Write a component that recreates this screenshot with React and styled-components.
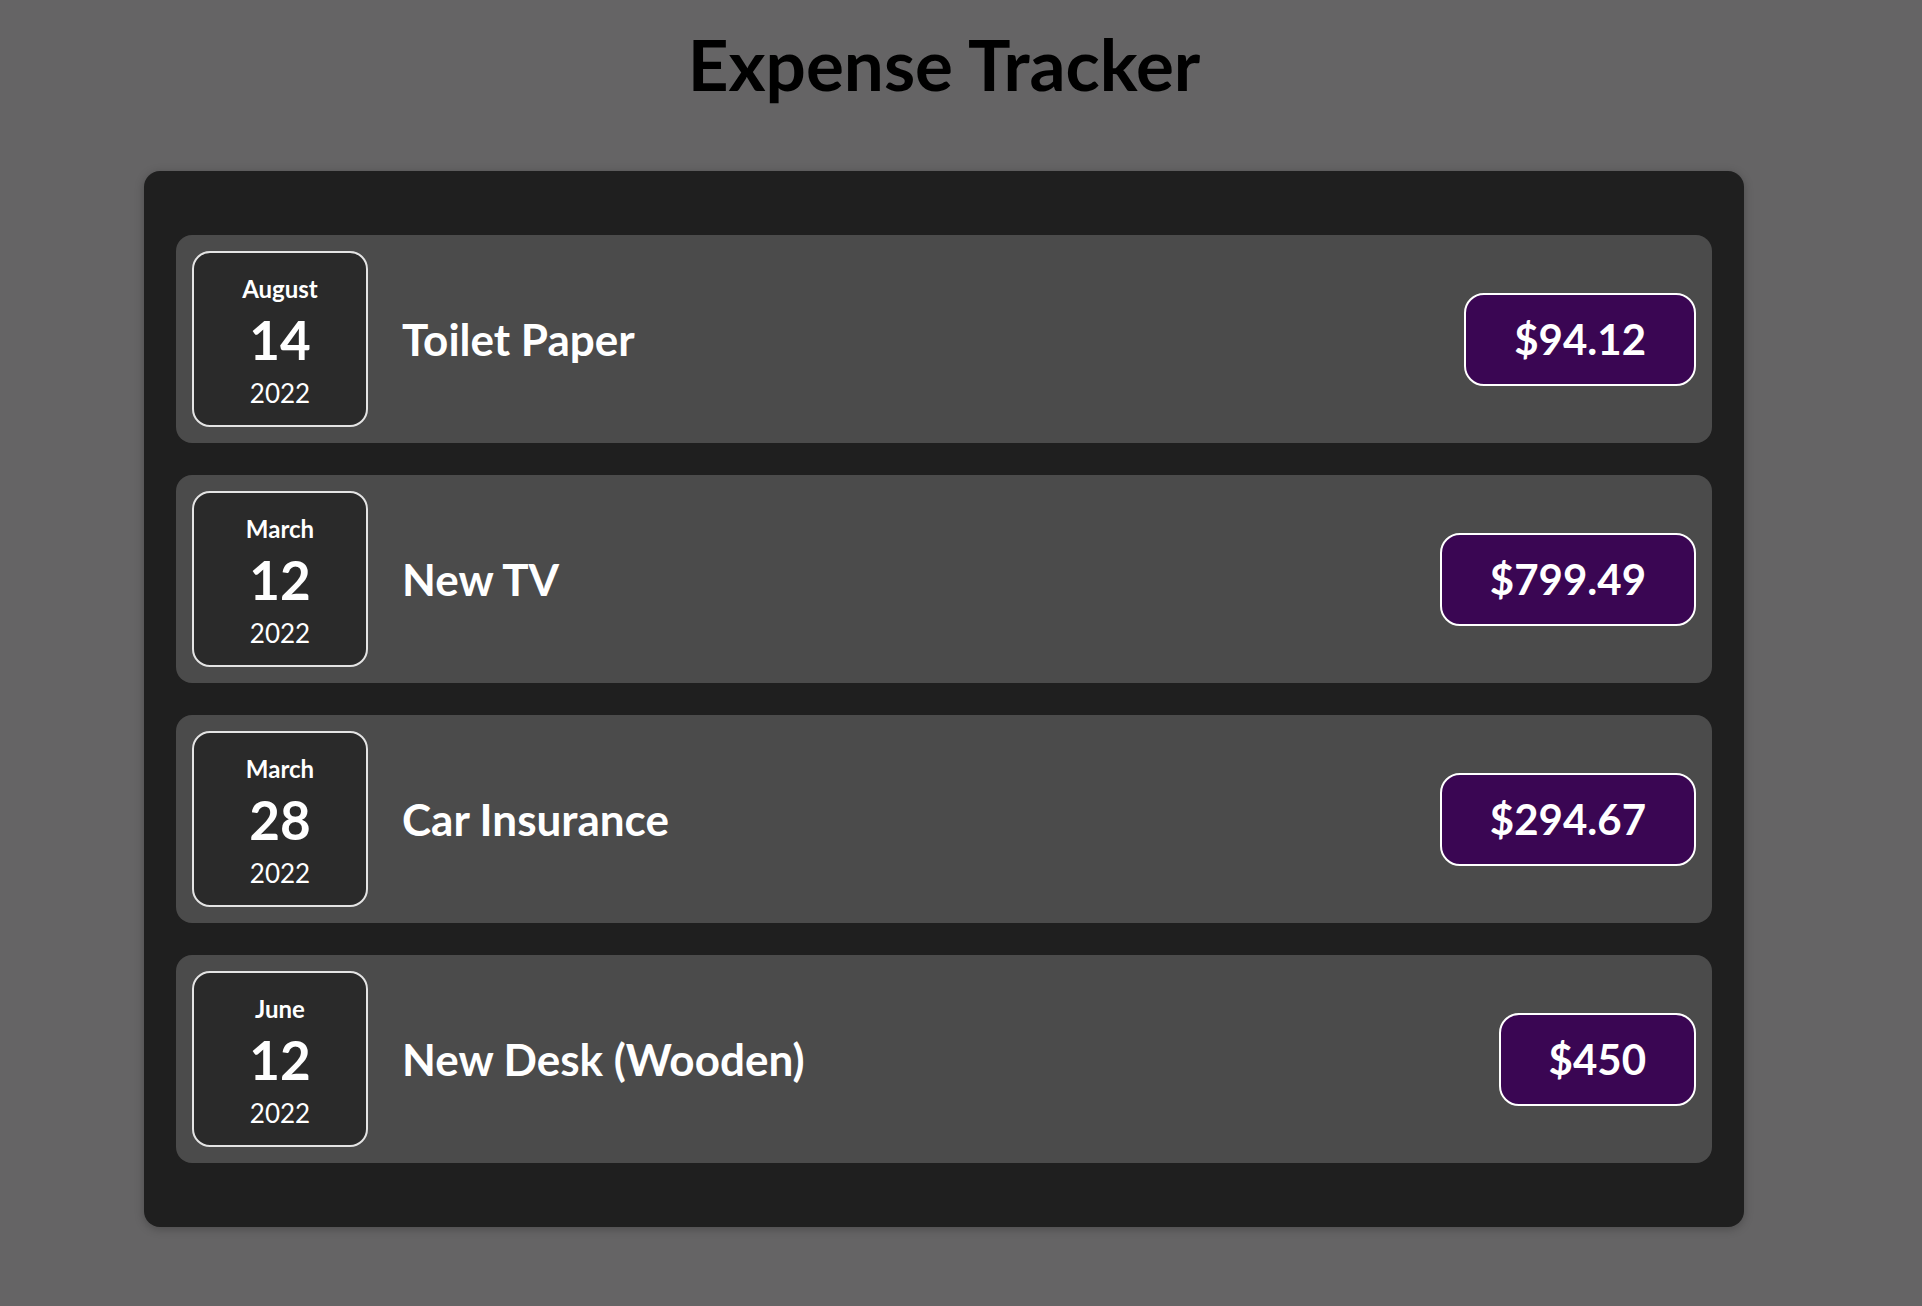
import React from "react";
import styled, { createGlobalStyle } from "styled-components";

const GlobalStyle = createGlobalStyle`
  body {
    margin: 0;
    background: #656465;
    font-family: "Lato", "Noto Sans", sans-serif;
  }
`;

const Page = styled.div`
  width: 1600px;
  margin-left: 144px;
  padding-bottom: 80px;
`;

const Title = styled.h1`
  margin: 0;
  padding-top: 22px;
  text-align: center;
  font-size: 71px;
  line-height: 84px;
  font-weight: 700;
  color: #000;
`;

const Card = styled.div`
  margin-top: 65px;
  background: #1f1f1f;
  border-radius: 16px;
  padding: 64px 32px;
  display: flex;
  flex-direction: column;
  gap: 32px;
  box-shadow: 0 2px 10px rgba(0, 0, 0, 0.25);
`;

const Item = styled.div`
  display: flex;
  align-items: center;
  gap: 34px;
  padding: 16px;
  background: #4b4b4b;
  border-radius: 16px;
`;

const DateBox = styled.div`
  box-sizing: border-box;
  width: 176px;
  height: 176px;
  padding-top: 3px;
  display: flex;
  flex-direction: column;
  align-items: center;
  justify-content: center;
  background: #2a2a2a;
  border: 2px solid #e4e4e4;
  border-radius: 18px;
  color: #fff;

  .date__month {
    font-size: 24px;
    font-weight: 700;
    line-height: 30px;
  }

  .date__day {
    font-size: 53px;
    font-weight: 700;
    line-height: 60px;
    margin: 6px 0 8px;
  }

  .date__year {
    font-size: 26px;
    line-height: 30px;
  }
`;

const Name = styled.h2`
  margin: 0;
  flex: 1;
  font-size: 44px;
  font-weight: 700;
  color: #fff;
`;

const Amount = styled.div`
  padding: 16px 48px;
  background: #3a0653;
  border: 2px solid #fff;
  border-radius: 20px;
  color: #fff;
  font-size: 42px;
  font-weight: 700;
  line-height: 57px;
`;

const expenses = [
  { month: "August", day: 14, year: 2022, name: "Toilet Paper", amount: "$94.12" },
  { month: "March", day: 12, year: 2022, name: "New TV", amount: "$799.49" },
  { month: "March", day: 28, year: 2022, name: "Car Insurance", amount: "$294.67" },
  { month: "June", day: 12, year: 2022, name: "New Desk (Wooden)", amount: "$450" },
];

const ExpenseItem = ({ month, day, year, name, amount }) => {
  return (
    <Item>
      <DateBox>
        <div className="date__month">{month}</div>
        <div className="date__day">{day}</div>
        <div className="date__year">{year}</div>
      </DateBox>
      <Name>{name}</Name>
      <Amount>{amount}</Amount>
    </Item>
  );
};

const App = () => {
  return (
    <>
      <GlobalStyle />
      <Page>
        <Title>Expense Tracker</Title>
        <Card>
          {expenses.map((e) => (
            <ExpenseItem key={e.name} {...e} />
          ))}
        </Card>
      </Page>
    </>
  );
};

export default App;
